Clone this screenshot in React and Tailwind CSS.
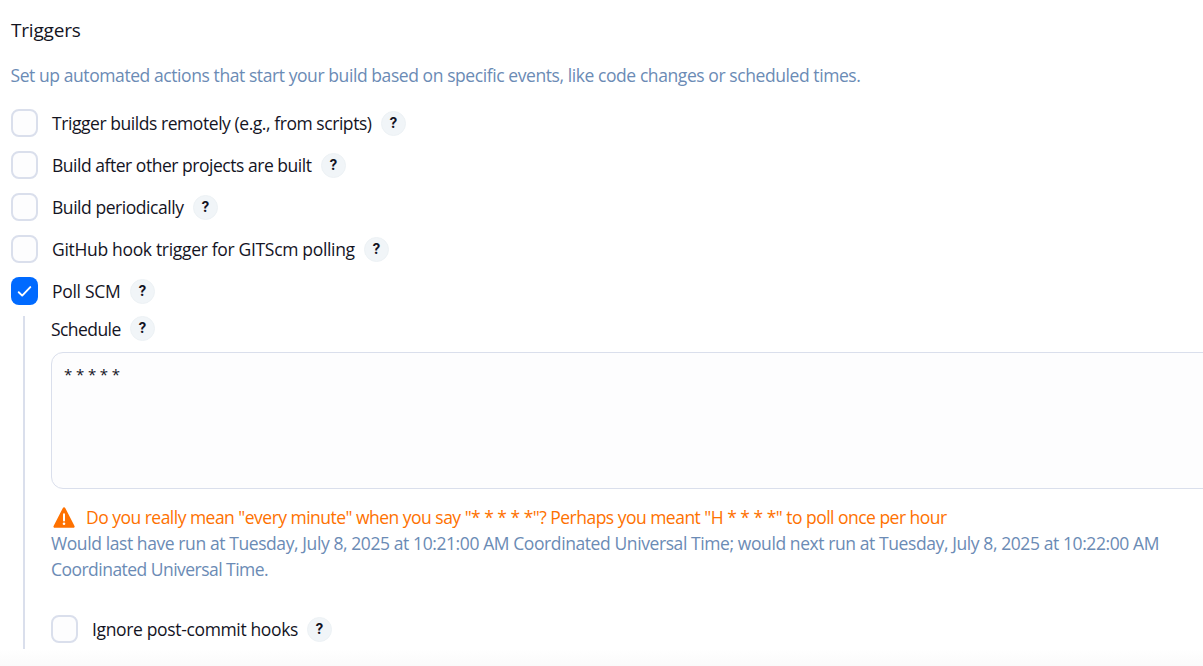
const font = "font-['Open_Sans','Noto_Sans',sans-serif]";

function Help() {
  return (
    <button
      type="button"
      className="flex h-[25px] w-[25px] shrink-0 items-center justify-center rounded-full border border-[#edf2f5] bg-[#f1f5f8] pb-px font-['Inter',sans-serif] text-[14px] leading-none font-bold text-[#14141f]"
    >
      ?
    </button>
  );
}

function Box({ checked }) {
  if (checked) {
    return (
      <span className="flex h-7 w-[27px] shrink-0 items-center justify-center rounded-[8px] bg-[#006aff]">
        <svg viewBox="0 0 27 28" className="h-7 w-[27px]" fill="none" stroke="#fff" strokeWidth="1.9" strokeLinecap="round" strokeLinejoin="round">
          <path d="M7.7 15.2 11.2 18.6 19.3 10.1" />
        </svg>
      </span>
    );
  }
  return <span className="h-7 w-[27px] shrink-0 rounded-[8px] border-2 border-[#dadfec] bg-[#fdfdfe]" />;
}

function Option({ label, labelClass, checked }) {
  return (
    <div className="flex h-7 items-center">
      <Box checked={checked} />
      <span className={`ml-3.5 mr-[9px] shrink-0 whitespace-nowrap pb-px ${labelClass}`}>{label}</span>
      <Help />
    </div>
  );
}

export default function App() {
  return (
    <main className={`flex h-[666px] w-full flex-col overflow-hidden bg-white text-[17.5px] leading-[26px] text-[#14141f] ${font}`}>
      <h2 className="mt-[17px] ml-[11px] whitespace-nowrap text-[19px] tracking-[-0.2px]">Triggers</h2>
      <p className="mt-[19px] ml-[10.5px] whitespace-nowrap tracking-[-0.42px] text-[#6b8bb5]">
        Set up automated actions that start your build based on specific events, like code changes or scheduled times.
      </p>
      <section className="mt-[21px] ml-[11px] flex flex-col gap-3.5">
        <Option label="Trigger builds remotely (e.g., from scripts)" labelClass="w-[320px] tracking-[-0.44px]" />
        <Option label="Build after other projects are built" labelClass="w-[260px] tracking-[-0.47px]" />
        <Option label="Build periodically" labelClass="w-[132px] tracking-[-0.45px]" />
        <Option label="GitHub hook trigger for GITScm polling" labelClass="w-[303px] tracking-[-0.32px]" />
        <Option label="Poll SCM" labelClass="w-[69px] tracking-[-0.3px]" checked />
      </section>
      <section className="mt-[11px] ml-[23px] flex h-[333px] shrink-0 flex-col border-l-2 border-[#dadfec] pl-[26px]">
        <div className="flex h-[25px] items-center">
          <span className="mr-2 w-[71px] whitespace-nowrap pt-px tracking-[-0.56px]">Schedule</span>
          <Help />
        </div>
        <div className="mt-[11px] -mr-5 h-[137px] rounded-[12px] border border-[#dadfec] bg-[#fdfdfe] px-3 py-[7px]">
          <span className="whitespace-pre text-[15px] tracking-[-0.1px]">* * * * *</span>
        </div>
        <div className="mt-[15px] flex h-[26px] items-center text-[#fe7100]">
          <svg viewBox="0 0 22 21" className="ml-[2px] mr-[11px] h-[21px] w-[22px]" fill="currentColor">
            <path d="M9.9.9a1.3 1.3 0 0 1 2.3 0l9.3 18a1.3 1.3 0 0 1-1.2 1.9H1.8a1.3 1.3 0 0 1-1.2-1.9Z" />
            <path d="M11 7.2v6.3" stroke="#fff" strokeWidth="2" strokeLinecap="round" />
            <circle cx="11" cy="16.8" r="1.3" fill="#fff" />
          </svg>
          <span className="whitespace-nowrap tracking-[-0.52px]">
            Do you really mean "every minute" when you say "* * * * *"? Perhaps you meant "H * * * *" to poll once per hour
          </span>
        </div>
        <div className="flex flex-col whitespace-nowrap text-[#6b8bb5]">
          <span className="tracking-[-0.41px]">
            Would last have run at Tuesday, July 8, 2025 at 10:21:00 AM Coordinated Universal Time; would next run at Tuesday, July 8, 2025 at 10:22:00 AM
          </span>
          <span className="tracking-[-0.53px]">Coordinated Universal Time.</span>
        </div>
        <div className="mt-[33px]">
          <Option label="Ignore post-commit hooks" labelClass="w-[206px] tracking-[-0.35px]" />
        </div>
      </section>
      <div className="h-[17px] shrink-0 bg-gradient-to-b from-white to-[#fafafa]" />
    </main>
  );
}
